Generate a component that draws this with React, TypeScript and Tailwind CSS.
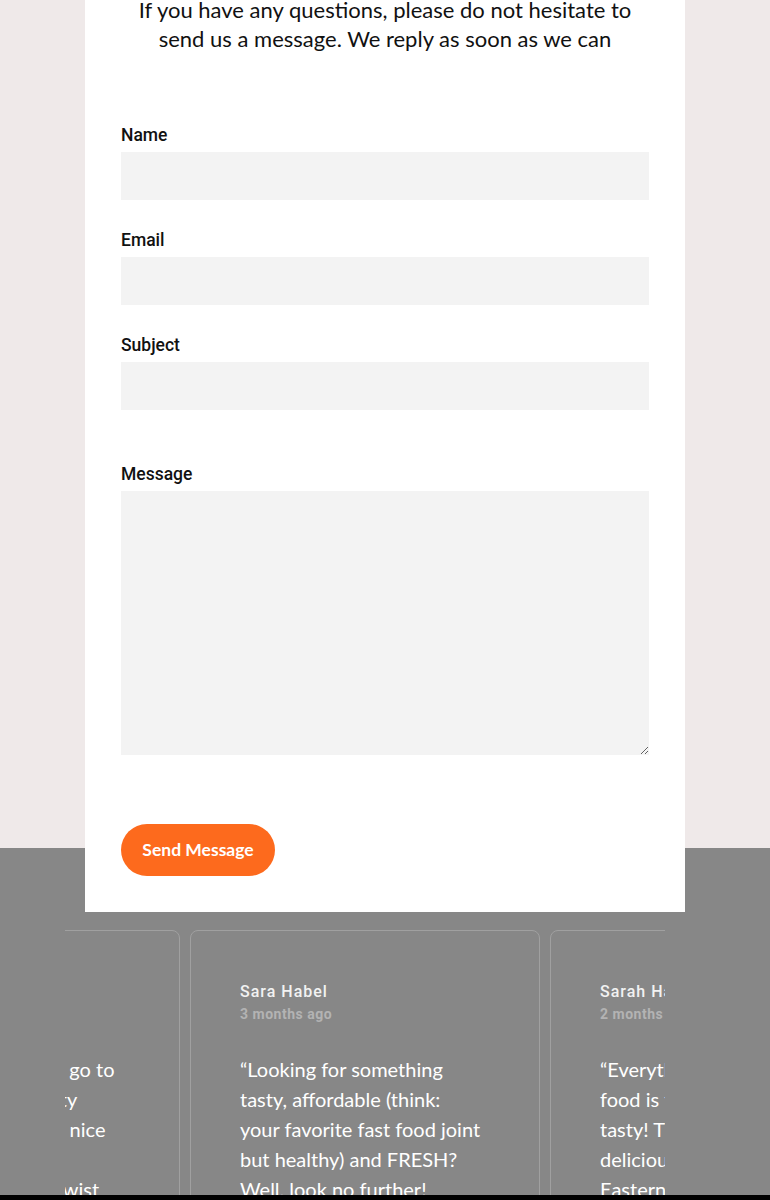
import React from "react";

// Reviews shown in the carousel strip
const reviews = [
  {
    name: "Mark Jensen",
    when: "1 month ago",
    lines: ["“This has become my go to", "spot, always very tasty", "food. The staff are so nice", "and friendly. A", "a classic dish with a twist"],
  },
  {
    name: "Sara Habel",
    when: "3 months ago",
    lines: ["“Looking for something", "tasty, affordable (think:", "your favorite fast food joint", "but healthy) and FRESH?", "Well, look no further!"],
  },
  {
    name: "Sarah Hamdan",
    when: "2 months ago",
    lines: ["“Everything was great, the", "food is fresh and so", "tasty! The sauces are", "delicious, the best Middle", "Eastern food in town."],
  },
];

function Field({ label, className = "" }: { label: string; className?: string }) {
  return (
    <div className={className}>
      <label className="block text-[17.5px] leading-[20px] font-medium text-[#111] mb-[7px]">{label}</label>
      <input type="text" className="block w-full h-[48px] bg-[#f3f3f3] outline-none px-3" />
    </div>
  );
}

export default function App() {
  return (
    <div className="w-[770px] h-[1200px] overflow-hidden font-['Roboto',sans-serif]">
      {/* Contact form section */}
      <div className="bg-[#efe9e9] h-[848px] flow-root">
        <div className="relative z-10 mx-auto w-[600px] bg-white px-[36px] pb-[36px] flow-root">
          <h2 className="-mt-[5px] text-center font-['Lato',sans-serif] text-[22px] leading-[29px] text-[#111] px-4">
            If you have any questions, please do not hesitate to send us a message. We reply as soon as we can
          </h2>

          <form className="mt-[72px]">
            <Field label="Name" />
            <Field label="Email" className="mt-[30px]" />
            <Field label="Subject" className="mt-[30px]" />

            <div className="mt-[54px]">
              <label className="block text-[17.5px] leading-[20px] font-medium text-[#111] mb-[7px]">Message</label>
              <textarea className="block w-full h-[264px] bg-[#f3f3f3] outline-none p-3" />
            </div>

            <button
              type="button"
              className="mt-[69px] h-[52px] w-[154px] rounded-full bg-[#fd6a1d] text-white font-['Lato',sans-serif] font-bold text-[17.5px]"
            >
              Send Message
            </button>
          </form>
        </div>
      </div>

      {/* Reviews strip */}
      <div className="bg-[#878787] h-[347px] overflow-hidden pt-[82px]">
        <div className="ml-[65px] w-[600px] overflow-hidden">
          <div className="flex gap-[10px] -ml-[235px]">
            {reviews.map((r) => (
              <div
                key={r.name}
                className="shrink-0 w-[350px] h-[400px] rounded-[8px] border border-[#a0a0a0] px-[49px] pt-[51px]"
              >
                <div className="text-[16px] leading-[20px] font-medium tracking-[1px] text-[#f2f2f2] whitespace-nowrap">
                  {r.name}
                </div>
                <div className="mt-[3px] text-[14px] leading-[18px] font-bold tracking-[0.5px] text-[#b3b3b3] whitespace-nowrap">
                  {r.when}
                </div>
                <p className="mt-[31px] font-['Lato',sans-serif] text-[20px] leading-[30px] text-white whitespace-nowrap">
                  {r.lines.map((l, i) => (
                    <span key={i} className="block">
                      {l}
                    </span>
                  ))}
                </p>
              </div>
            ))}
          </div>
        </div>
      </div>
      <div className="h-[5px] bg-black" />
    </div>
  );
}
